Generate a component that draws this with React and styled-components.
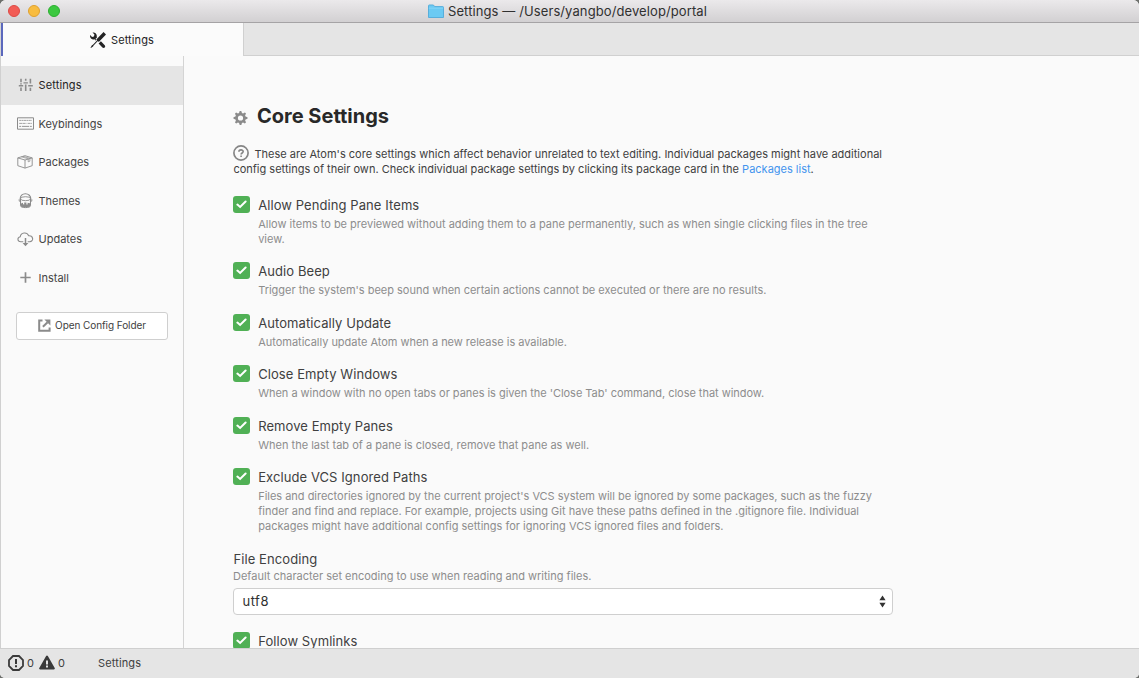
import React from 'react';
import styled, { createGlobalStyle } from 'styled-components';

const GlobalStyle = createGlobalStyle`
  html, body { margin: 0; padding: 0; height: 100%; background: #6d6f6c; overflow: hidden; }
  #root { height: 100%; }
  * { box-sizing: border-box; }
`;

const Window = styled.div`
  display: flex;
  flex-direction: column;
  height: 678px;
  width: 1139px;
  overflow: hidden;
  border-radius: 6px 6px 5px 5px;
  background: #fafafa;
  color: #404040;
  font-family: Inter, "Liberation Sans", sans-serif;
  font-size: 11px;
`;

const TitleBar = styled.header`
  display: grid;
  grid-template-columns: 1fr auto 1fr;
  align-items: center;
  flex: none;
  height: 23px;
  padding-left: 8px;
  background: linear-gradient(#ebe9eb, #d2d0d2);
  border-bottom: 1px solid #a5a3a5;
`;

const Lights = styled.div`
  display: flex;
  gap: 8px;
`;

const Light = styled.span`
  width: 12px;
  height: 12px;
  border-radius: 50%;
  background: ${(p) => p.$fill};
  border: 1px solid ${(p) => p.$edge};
`;

const WindowTitle = styled.div`
  display: flex;
  align-items: center;
  gap: 4px;
  padding-right: 12px;
  font-size: 13px;
  letter-spacing: 0.1px;
  color: #303030;
  white-space: nowrap;
`;

const TabBar = styled.nav`
  display: flex;
  flex: none;
  height: 33px;
  background: #e5e5e5;
  border-bottom: 1px solid #d0d0d0;
`;

const Tab = styled.div`
  display: flex;
  align-items: center;
  justify-content: center;
  gap: 5px;
  width: 244px;
  height: 33px;
  background: #fbfbfb;
  border-left: 1px solid #d4d4d4;
  border-right: 1px solid #d0d0d0;
  box-shadow: inset 2px 0 0 #5b68bd;
  color: #232324;
  letter-spacing: 0.12px;
`;

const Main = styled.main`
  display: flex;
  flex: 1;
  min-height: 0;
  border-left: 1px solid #d0d0d0;
`;

const Sidebar = styled.aside`
  flex: none;
  width: 183px;
  padding-top: 10px;
  border-right: 1px solid #d4d4d4;
`;

const NavItem = styled.div`
  display: grid;
  grid-template-columns: 17px auto;
  align-items: center;
  justify-items: start;
  column-gap: 4.5px;
  height: 38.5px;
  padding-left: 16px;
  background: ${(p) => (p.$active ? '#e5e5e5' : 'transparent')};
  color: ${(p) => (p.$active ? '#232324' : '#444')};
  letter-spacing: ${(p) => (p.$active ? 0.12 : 0)}px;
  svg { color: #8b8b8b; }
`;

const ConfigButton = styled.button`
  display: flex;
  align-items: center;
  justify-content: center;
  gap: 4px;
  width: 152px;
  height: 28px;
  margin: 15px 0 0 15px;
  padding: 0 0 1px;
  border: 1px solid #cfcfcf;
  border-radius: 3px;
  background: #fff;
  color: #3e3e3e;
  font: 10px Inter, "Liberation Sans", sans-serif;
  letter-spacing: -0.08px;
  span { padding-bottom: 1px; }
  svg { color: #8b8b8b; }
`;

const Panel = styled.section`
  flex: 1;
  min-width: 0;
  padding: 46px 0 0 49px;
  overflow: hidden;
  white-space: nowrap;
`;

const Heading = styled.h1`
  display: flex;
  align-items: center;
  gap: 9px;
  height: 28px;
  margin: 0;
  font-size: 20px;
  font-weight: 700;
  color: #282828;
  svg { color: #8b8b8b; position: relative; top: 2px; }
`;

const Intro = styled.div`
  margin: 17px 0 0 0.4px;
  height: 46.5px;
`;

const Line = styled.div`
  display: flex;
  align-items: center;
  height: 15px;
  line-height: 15px;
  letter-spacing: ${(p) => p.$track || 0}px;
  svg { margin: -3px 5px 0 0; color: #858585; flex: none; }
`;

const Link = styled.a`
  color: #4294ee;
`;

const Setting = styled.div`
  display: grid;
  grid-template-columns: 17px auto;
  column-gap: 8.2px;
  margin-bottom: 13.5px;
`;

const Checkbox = styled.span`
  display: grid;
  place-items: center;
  width: 17px;
  height: 17px;
  margin-top: 2px;
  border-radius: 3px;
  background: #50b055;
`;

const Label = styled.div`
  height: 23px;
  line-height: 22px;
  font-size: 13px;
  letter-spacing: 0.08px;
`;

const Description = styled.div`
  color: #8d8d8d;
`;

const Field = styled.div`
  margin-bottom: 15px;
`;

const FieldLabel = styled(Label)`
  height: 21.5px;
  padding-left: 0.5px;
`;

const Select = styled.div`
  display: flex;
  align-items: center;
  justify-content: space-between;
  width: 660px;
  height: 27px;
  margin-top: 4px;
  padding: 0 6px 0 8.5px;
  border: 1px solid #cfcfcf;
  border-radius: 4px;
  background: #fff;
  font-size: 13px;
  color: #303030;
  letter-spacing: 0.5px;
  span { padding-bottom: 1px; }
`;

const StatusBar = styled.footer`
  display: flex;
  align-items: center;
  flex: none;
  height: 30px;
  padding: 0 0 1px 8px;
  background: #e5e5e5;
  border-top: 1px solid #cfcfcf;
  letter-spacing: 0.12px;
  svg { margin-right: 3px; color: #3a3a3a; }
`;

const Count = styled.span`
  width: ${(p) => p.$width}px;
`;

const Tools = () => (
  <svg width="16" height="16" viewBox="0 0 16 16" fill="currentColor">
    <path d="M4.48 7.27c.26.26 1.28 1.33 1.28 1.33l.56-.58-.88-.91 1.69-1.8s-.76-.74-.43-.45c.32-1.19.03-2.51-.87-3.44C4.93.5 3.66.2 2.52.51l1.93 2-.51 1.96-1.89.52-1.93-1.99C-.19 4.17.1 5.48 1 6.4c.94.98 2.29 1.26 3.48.87zm6.44 1.94l-2.33 2.3 3.84 3.98c.31.33.73.49 1.14.49.41 0 .82-.16 1.14-.49.63-.65.63-1.7 0-2.35l-3.79-3.93zM16 2.53L13.55 0 6.33 7.46l.88.91-4.31 4.46-.99.53-1.39 2.27.35.37 2.2-1.44.51-1.02L7.9 9.08l.88.91L16 2.53z" />
  </svg>
);

const Gear = () => (
  <svg width="15" height="16" viewBox="0 0 14 16" fill="currentColor">
    <path d="M14 8.77v-1.6l-1.94-.64-.45-1.09.88-1.84-1.13-1.13-1.81.91-1.09-.45-.69-1.92h-1.6l-.63 1.94-1.11.45-1.84-.88-1.13 1.13.91 1.81-.45 1.09L0 7.23v1.59l1.94.64.45 1.09-.88 1.84 1.13 1.13 1.81-.91 1.09.45.69 1.92h1.59l.63-1.94 1.11-.45 1.84.88 1.13-1.13-.92-1.81.47-1.09L14 8.75v.02zM7 10.6A2.6 2.6 0 1 1 7 5.4a2.6 2.6 0 0 1 0 5.2z" />
  </svg>
);

const Question = () => (
  <svg width="16" height="16" viewBox="0 0 16 16" fill="none" stroke="currentColor">
    <circle cx="8" cy="8" r="7.1" strokeWidth="1.7" />
    <path d="M5.9 6.7C5.9 4.3 10.2 4.3 10.2 6.6C10.2 8 8.1 8 8.1 9.5M8.1 10.4v1.5" strokeWidth="1.6" />
  </svg>
);

const Sliders = () => (
  <svg width="17" height="14" viewBox="0 0 17 14" fill="currentColor">
    <path d="M3.2.8h1.6v3.4H3.2zM3.2 9.4h1.6V13H3.2zM3.2 5.2h1.6v1.4H3.2zM1.8 7.1h4.4v1.4H1.8zM7.9.8h1.6v2H7.9zM7.9 6.5h1.6V13H7.9zM6.5 4.2h4.4v1.4H6.5zM12.6.8h1.6v4.8h-1.6zM12.6 9.8h1.6V13h-1.6zM11.2 7.1h4.6v1.4h-4.6z" />
  </svg>
);

const Keyboard = () => (
  <svg width="17" height="13" viewBox="0 0 17 13" fill="none" stroke="currentColor">
    <path d="M.5.8h16v11.4H.5z" />
    <path d="M2.2 3.4h12.6" strokeDasharray="2 .4" strokeWidth=".8" />
    <path d="M2.2 6.4h7.2M10.6 6.4h4.2" strokeDasharray="3 .4" strokeWidth=".8" />
    <path d="M2.2 9.4h2M5 9.4h7M12.8 9.4h2" strokeWidth=".9" />
  </svg>
);

const Package = () => (
  <svg width="17" height="14" viewBox="0 0 17 14" fill="none" stroke="currentColor" strokeLinejoin="round" strokeWidth=".9">
    <path d="M.8 2.9L8 .7l7.2 2.2v7.8L8 13.1.8 10.7zM.8 2.9L8 5l7.2-2.1M8 5v8.1" />
    <path d="M4.3 1.8l6.9 2v3l1.7-.6V3.4L6 1.3" strokeWidth=".7" />
  </svg>
);

const Bucket = () => (
  <svg width="17" height="16" viewBox="0 0 17 16" fill="none" stroke="currentColor">
    <path d="M3.2 6.2C3 2.8 5.4.8 8.4.8S14 2.8 13.8 6.2" strokeWidth="1.1" />
    <ellipse cx="8.5" cy="5.7" rx="5" ry="2" strokeWidth=".9" />
    <path d="M3.5 5.8v7c0 2.4 10 2.4 10 0v-7" />
    <path d="M2.2 6.2v1.9l2 .7M14.8 6.2v1.9l-2 .7" strokeWidth=".9" />
    <path d="M4 10.4l2-.6v1.4l1.2.3V9.6h2.2v2l1.2-.2V9.8l2.4.4v3c-.8 1.5-8.2 1.5-9 0z" fill="currentColor" stroke="none" />
  </svg>
);

const CloudDownload = () => (
  <svg width="17" height="15" viewBox="0 0 17 15" fill="none" stroke="currentColor" strokeWidth="1.1">
    <path d="M6.3 9.7H3.8C.2 9.7 0 5.5 3.2 4.8 4 .3 9.8-.4 11.7 3.7c5-.3 5.2 6 1 6h-2" />
    <path d="M8.5 6v7" strokeWidth="1.5" />
    <path d="M5.6 10.9h5.8L8.5 14.3z" fill="currentColor" stroke="none" />
  </svg>
);

const Plus = () => (
  <svg width="17" height="14" viewBox="0 0 17 14" fill="none" stroke="currentColor" strokeWidth="1.7">
    <path d="M8.5 1.3v10.4M3.3 6.5h10.4" />
  </svg>
);

const OpenExternal = () => (
  <svg width="13" height="13" viewBox="0 0 13 13" fill="none" stroke="currentColor" strokeWidth="2">
    <path d="M4.5 1.4H1.2v10.4h10.4V8.6" />
    <path d="M4.9 7.8L9.6 3.2" />
    <path d="M6.4.4h6v6l-2-2-2-2z" fill="currentColor" stroke="none" />
  </svg>
);

const Folder = () => (
  <svg width="16" height="15" viewBox="0 0 16 15">
    <path d="M.5 13.5V1.7c0-.5.3-.7.7-.7h4.2l1.3 1.6h8.1c.5 0 .7.3.7.7v10.2z" fill="#6ccaf3" stroke="#58aedb" />
    <path d="M.8 4.2h14.4" stroke="#8ad8f8" strokeWidth=".8" />
  </svg>
);

const Stop = () => (
  <svg width="16" height="16" viewBox="0 0 16 16" fill="none" stroke="currentColor">
    <path d="M5 1h6l4 4v6l-4 4H5l-4-4V5z" strokeWidth="1.8" />
    <path d="M8 4v5M8 10.3v2" strokeWidth="2" />
  </svg>
);

const Alert = () => (
  <svg width="16" height="16" viewBox="0 0 16 16" fill="currentColor">
    <path d="M8.865 1.02c-.18-.31-.51-.5-.87-.5s-.69.19-.87.5L.275 13c-.18.31-.18.69 0 1 .19.31.52.5.87.5h13.7c.36 0 .69-.19.86-.5.17-.31.18-.69.01-1L8.865 1.02zM8.995 12.5h-2v-2h2v2zm0-3h-2v-4h2v4z" />
  </svg>
);

const Check = () => (
  <svg width="11" height="9" viewBox="0 0 11 9" fill="none" stroke="#fff" strokeWidth="2" strokeLinecap="round">
    <path d="M1.4 4.6l2.7 2.3L9.6 1.5" />
  </svg>
);

const Arrows = () => (
  <svg width="7" height="13" viewBox="0 0 7 13" fill="#333">
    <path d="M3.5.5L6.6 5.3H.4zM.4 7.7h6.2L3.5 12.5z" />
  </svg>
);

const navItems = [
  { label: 'Settings', icon: Sliders, active: true },
  { label: 'Keybindings', icon: Keyboard },
  { label: 'Packages', icon: Package },
  { label: 'Themes', icon: Bucket },
  { label: 'Updates', icon: CloudDownload },
  { label: 'Install', icon: Plus },
];

const settings = [
  {
    label: 'Allow Pending Pane Items',
    lines: [
      ['Allow items to be previewed without adding them to a pane permanently, such as when single clicking files in the tree', 0],
      ['view.', 0],
    ],
  },
  { label: 'Audio Beep', lines: [["Trigger the system's beep sound when certain actions cannot be executed or there are no results.", -0.01]] },
  { label: 'Automatically Update', lines: [['Automatically update Atom when a new release is available.', -0.02]] },
  { label: 'Close Empty Windows', lines: [["When a window with no open tabs or panes is given the 'Close Tab' command, close that window.", -0.03]] },
  { label: 'Remove Empty Panes', lines: [['When the last tab of a pane is closed, remove that pane as well.', 0]] },
  {
    label: 'Exclude VCS Ignored Paths',
    lines: [
      ["Files and directories ignored by the current project's VCS system will be ignored by some packages, such as the fuzzy", -0.02],
      ['finder and find and replace. For example, projects using Git have these paths defined in the .gitignore file. Individual', 0],
      ['packages might have additional config settings for ignoring VCS ignored files and folders.', 0],
    ],
  },
];

const SettingRow = ({ label, lines = [] }) => (
  <Setting>
    <Checkbox><Check /></Checkbox>
    <div>
      <Label>{label}</Label>
      <Description>
        {lines.map(([text, spacing]) => <Line key={text} $track={spacing}><span>{text}</span></Line>)}
      </Description>
    </div>
  </Setting>
);

export default function App() {
  return (
    <Window>
      <GlobalStyle />
      <TitleBar>
        <Lights>
          <Light $fill="#f25c56" $edge="#dc4a45" />
          <Light $fill="#f8bc40" $edge="#dfa02f" />
          <Light $fill="#3cc840" $edge="#2bae30" />
        </Lights>
        <WindowTitle><Folder /><span>Settings — /Users/yangbo/develop/portal</span></WindowTitle>
        <span />
      </TitleBar>
      <TabBar>
        <Tab><Tools /><span>Settings</span></Tab>
      </TabBar>
      <Main>
        <Sidebar>
          {navItems.map(({ label, icon: Icon, active }) => (
            <NavItem key={label} $active={active}><Icon /><span>{label}</span></NavItem>
          ))}
          <ConfigButton><OpenExternal /><span>Open Config Folder</span></ConfigButton>
        </Sidebar>
        <Panel>
          <Heading><Gear /><span>Core Settings</span></Heading>
          <Intro>
            <Line $track={0.01}>
              <Question />
              <span>These are Atom's core settings which affect behavior unrelated to text editing. Individual packages might have additional</span>
            </Line>
            <Line>
              <span>config settings of their own. Check individual package settings by clicking its package card in the <Link>Packages list</Link>.</span>
            </Line>
          </Intro>
          {settings.map((s) => <SettingRow key={s.label} {...s} />)}
          <Field>
            <FieldLabel>File Encoding</FieldLabel>
            <Description><Line><span>Default character set encoding to use when reading and writing files.</span></Line></Description>
            <Select><span>utf8</span><Arrows /></Select>
          </Field>
          <SettingRow label="Follow Symlinks" />
        </Panel>
      </Main>
      <StatusBar>
        <Stop /><Count $width={12}>0</Count>
        <Alert /><Count $width={40}>0</Count>
        <span>Settings</span>
      </StatusBar>
    </Window>
  );
}
